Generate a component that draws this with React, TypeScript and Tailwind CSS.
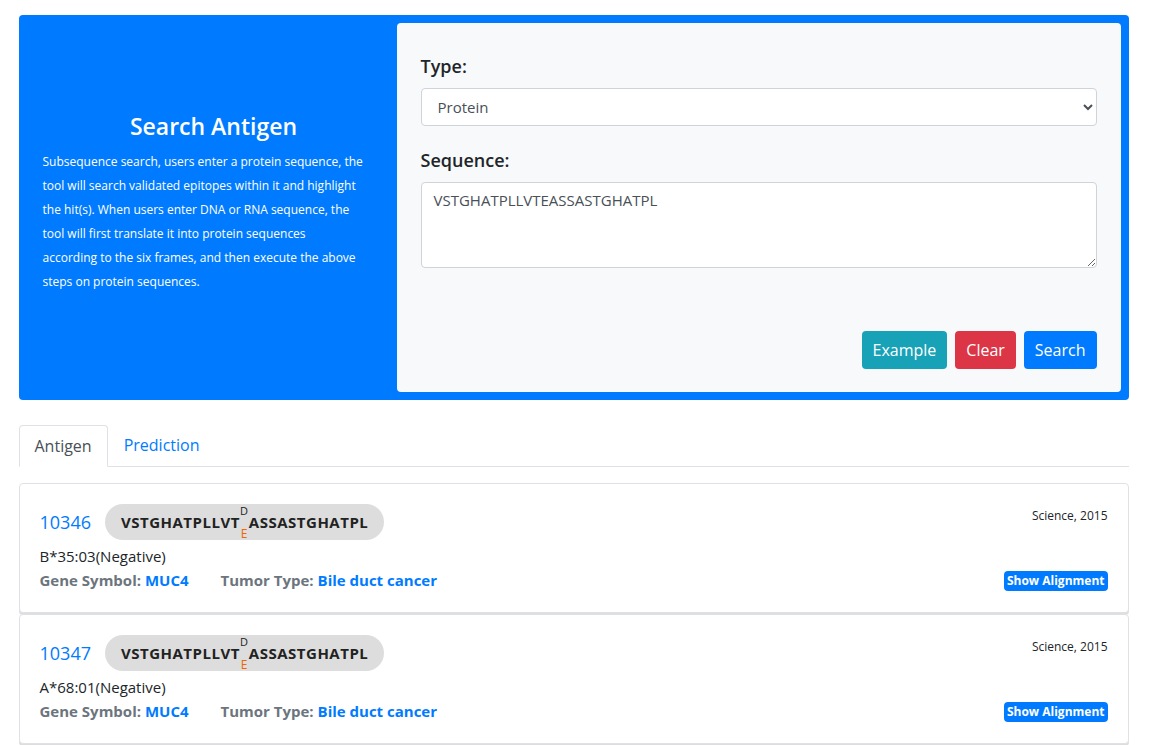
import React from 'react'

const font = { fontFamily: '"Open Sans", "Noto Sans", Arial, sans-serif' }

type Hit = {
  id: string
  hla: string
}

const hits: Hit[] = [
  { id: '10346', hla: 'B*35:03(Negative)' },
  { id: '10347', hla: 'A*68:01(Negative)' },
]

// line breaks follow the original wrapping
const intro = [
  'Subsequence search, users enter a protein sequence, the',
  'tool will search validated epitopes within it and highlight',
  'the hit(s). When users enter DNA or RNA sequence, the',
  'tool will first translate it into protein sequences',
  'according to the six frames, and then execute the above',
  'steps on protein sequences.',
]

function SequencePill() {
  return (
    <span className="inline-flex h-9 items-center rounded-full bg-[#dddddd] px-4 text-[15px] font-bold tracking-[0.5px] text-[#222]">
      VSTGHATPLLVT
      <span className="relative inline-flex w-[9px] flex-col items-center leading-none">
        <span className="relative -top-[6px] text-[11px] font-normal text-[#222]">D</span>
        <span className="relative top-[6px] text-[12px] font-normal text-[#f26500]">E</span>
      </span>
      ASSASTGHATPL
    </span>
  )
}

function HitCard({ hit }: { hit: Hit }) {
  return (
    <div className="flex justify-between rounded border border-[#dee2e6] bg-white px-5 pb-[21px] pt-5 shadow-[0_2px_0_#dddddd]">
      <div>
        <div className="flex items-center gap-[14px]">
          <span className="text-lg text-[#007bff]">{hit.id}</span>
          <SequencePill />
        </div>
        <div className="mt-[5px] text-[15px] text-[#212529]">{hit.hla}</div>
        <div className="mt-[1px] flex gap-8 text-[15px] font-bold text-[#6c757d]">
          <span>
            Gene Symbol: <span className="text-[#007bff]">MUC4</span>
          </span>
          <span>
            Tumor Type: <span className="text-[#007bff]">Bile duct cancer</span>
          </span>
        </div>
      </div>
      <div className="flex flex-col items-end justify-between">
        <span className="mt-1 text-xs text-[#212529]">Science, 2015</span>
        <span className="rounded bg-[#007bff] px-[3px] py-[2px] text-xs font-bold text-white">Show Alignment</span>
      </div>
    </div>
  )
}

export default function App() {
  return (
    <div className="min-h-screen bg-white pt-[15px]" style={font}>
      <div className="mx-auto w-[1110px] -translate-x-[1px]">
        <div className="flex rounded bg-[#007bff] p-2">
          <div className="flex w-[370px] shrink-0 flex-col justify-center pb-3 pl-4 pr-3 text-white">
            <h2 className="mb-[6px] text-center text-[23px] font-semibold">Search Antigen</h2>
            <p className="text-[12px] leading-6">
              {intro.map((line) => (
                <span key={line} className="block whitespace-nowrap">
                  {line}
                </span>
              ))}
            </p>
          </div>
          <div className="flex-1 rounded bg-[#f8f9fa] px-6 pb-[23px] pt-[29px] text-[#212529]">
            <label className="mb-2 block text-lg font-semibold">Type:</label>
            <select className="block h-[38px] w-full rounded border border-[#ced4da] bg-white px-3 text-[15px] text-[#495057]">
              <option>Protein</option>
            </select>
            <label className="mb-2 mt-[20px] block text-lg font-semibold">Sequence:</label>
            <textarea
              className="block h-[86px] w-full rounded border border-[#ced4da] bg-white px-3 py-[6px] text-[15px] text-[#495057]"
              defaultValue="VSTGHATPLLVTEASSASTGHATPL"
            />
            <div className="mt-[63px] flex justify-end gap-2">
              <button className="h-[38px] rounded bg-[#17a2b8] px-[11px] text-base text-white">Example</button>
              <button className="h-[38px] rounded bg-[#dc3545] px-[11px] text-base text-white">Clear</button>
              <button className="h-[38px] rounded bg-[#007bff] px-[11px] text-base text-white">Search</button>
            </div>
          </div>
        </div>

        <div className="mt-[25px] flex border-b border-[#dee2e6] text-base">
          <div className="-mb-px rounded-t border border-[#dee2e6] border-b-white bg-white px-[15px] py-[8px] text-[#495057]">
            Antigen
          </div>
          <div className="px-4 py-[8px] text-[#007bff]">Prediction</div>
        </div>

        <div className="mt-[16px] flex flex-col gap-px">
          {hits.map((h) => (
            <HitCard key={h.id} hit={h} />
          ))}
        </div>
      </div>
    </div>
  )
}
